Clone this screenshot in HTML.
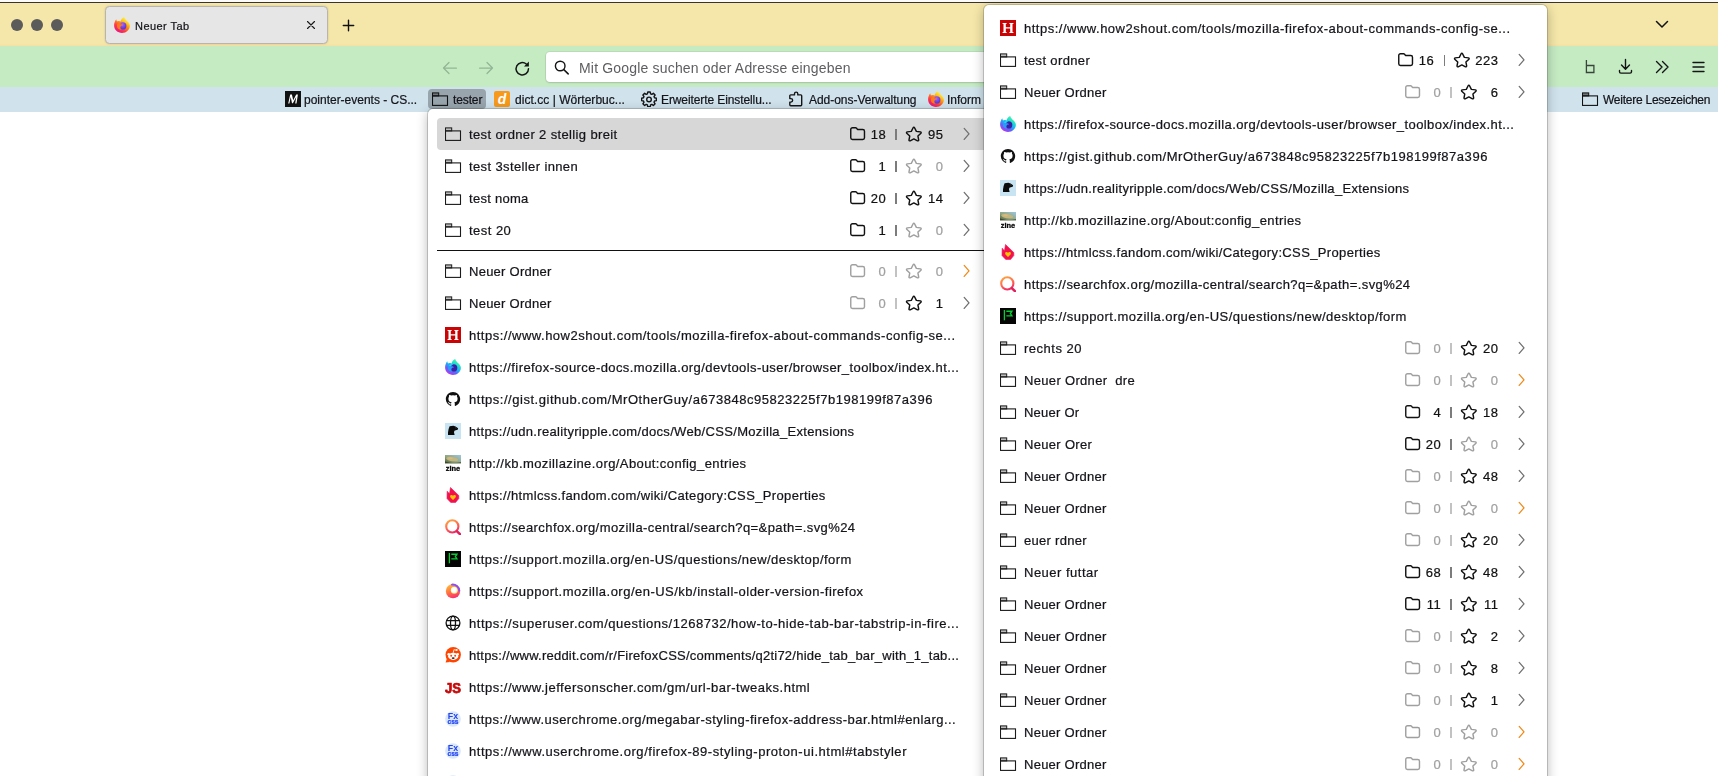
<!DOCTYPE html>
<html><head><meta charset="utf-8"><title>Neuer Tab</title>
<style>
html,body{margin:0;padding:0}
body{width:1718px;height:776px;overflow:hidden;background:#fff;position:relative;font-family:"Liberation Sans",sans-serif;font-size:13px;color:#15141a}
.abs{position:absolute}
.t,.n,.title,.ph,.bm span{will-change:transform}
.t,.n,.title,.bm span{-webkit-text-stroke:0.220px currentColor}
#topline{left:0;top:0;width:1718px;height:3px;background:linear-gradient(#fbfbfb 0,#fbfbfb 1.800px,#3a3334 2px,#3a3334 3px)}
#tabbar{left:0;top:3px;width:1718px;height:43.300px;background:linear-gradient(#f5e7a9 0,#f5e7a9 41px,#f7e0a3 42px,#f7e0a3 100%)}
#navbar{left:0;top:46.300px;width:1718px;height:40.500px;background:#c5ebc3}
#bmbar{left:0;top:86.800px;width:1718px;height:25px;background:#d0e3ed}
.tl{position:absolute;top:19px;width:12px;height:12px;border-radius:50%;background:#5b5b5b}
#tab{left:105px;top:6px;width:221px;height:36px;border:1px solid #b9b5ad;border-radius:4.500px;background:#e6e6e6;box-shadow:0 0 2px rgba(0,0,0,.18)}
#tab .title{position:absolute;left:30px;top:12.500px;font-size:11px;color:#15141a;white-space:nowrap}
#urlbar{left:546px;top:52px;width:460px;height:30px;background:#fff;border-radius:4px;box-shadow:0 0 0 1px rgba(0,0,0,.06),0 1px 2px rgba(0,0,0,.12)}
#urlbar .ph{position:absolute;left:34px;top:7.500px;font-size:14px;color:#5e5e62;white-space:nowrap}
.bm{position:absolute;top:91px;height:17px;line-height:17px;font-size:12px;white-space:nowrap;color:#15141a}
.bm svg{position:absolute;left:0;top:-0.500px}
.bm span{position:absolute;left:20px;top:0.500px}
.popup{position:absolute;background:#fff;border-radius:5px;box-shadow:0 0 0 1px rgba(0,0,0,.17),0 3px 12px rgba(0,0,0,.30)}
#pl{left:427.500px;top:109px;width:601px;height:700px}
#pr{left:983.500px;top:4.500px;width:563.500px;height:800px}
.row{position:absolute;left:9.500px;right:8px;height:32px;border-radius:4px;white-space:nowrap}
#pr .row{left:8.500px}
.row.hl{background:#d7d7d7}
.row .ic{position:absolute;left:8px;top:8px}
.row .t{position:absolute;left:32px;top:8.500px;line-height:15px;font-size:13px;white-space:pre}
.sep{position:absolute;left:9.500px;right:0;height:1px;background:#111}
.cnt{position:absolute;left:412.500px;top:0;height:32px;width:130px}
#pr .cnt{left:412.500px}
.cnt svg{position:absolute}
.cnt .grp{position:absolute;top:0;width:80px;height:32px}
.cnt .cf{left:0;top:7.500px}
.cnt .n{position:absolute;left:13.200px;width:23.300px;text-align:right;top:8.500px;line-height:15px;font-size:13px;letter-spacing:.5px}
.cnt .bar{position:absolute;left:45.800px;top:10.500px;width:1.400px;height:11px}
.cnt .cs{left:55.500px;top:7.500px}
.cnt .n2{left:66px;width:27.500px}
.cnt .ch{left:113px;top:8.500px}
</style></head><body>
<div class="abs" id="tabbar"></div>
<div class="abs" id="navbar"></div>
<div class="abs" id="bmbar"></div>
<div class="abs" id="topline"></div>
<div class="tl" style="left:11px"></div><div class="tl" style="left:31px"></div><div class="tl" style="left:51px"></div>
<div class="abs" id="tab"><div class="abs" style="left:8px;top:9.700px"><svg width="16" height="16" viewBox="0 0 16 16"><defs><linearGradient id="fl1" x1=".82" y1=".08" x2=".22" y2=".95"><stop offset="0" stop-color="#fff44f"/><stop offset=".22" stop-color="#ffd21f"/><stop offset=".45" stop-color="#ff8a16"/><stop offset=".72" stop-color="#ff3647"/><stop offset="1" stop-color="#e31587"/></linearGradient><radialGradient id="fl1g" cx=".45" cy=".3" r=".8"><stop offset="0" stop-color="#a667ff"/><stop offset=".6" stop-color="#6b3fe0"/><stop offset="1" stop-color="#3a3bd0"/></radialGradient></defs><path d="M10.300.1C10.400 1.500 11.400 2.500 12.400 3.400 13.900 4.600 15.900 6.200 15.900 8.800 15.900 12.800 12.400 16 8 16S.1 12.800.1 8.600C.1 6.200.9 4 2.300 2.300 2.400 3.200 2.700 3.900 3.100 4.400 3.800 4.100 4.600 4 5.400 4.100 5.800 4.200 6.300 4.300 6.700 4.500 6.600 2.800 8.200 1.100 10.300.1z" fill="url(#fl1)"/><circle cx="8.700" cy="8.900" r="3.700" fill="url(#fl1g)"/><path d="M3.300 7.300c1.100-1.900 3.700-2.500 5.500-1.300-1.300-.1-2.300.400-2.700 1.300 1.500 0 2.700.400 3 1.400-1.200-.300-2.200.1-2.600 1-.500 1 .100 2.400 1.700 2.900-2.700.500-5.300-1.200-5.300-3.700 0-.6.100-1.100.4-1.600z" fill="#ff7a1c"/></svg></div><div class="title" id="title" style="letter-spacing:0.450px;margin-left:-0.80px">Neuer Tab</div>
<svg class="abs" style="left:200px;top:13px" width="10" height="10" viewBox="0 0 10 10"><path d="M1.500 1.500l7 7M8.500 1.500l-7 7" stroke="#1a1a1a" stroke-width="1.150" stroke-linecap="round"/></svg></div>
<svg class="abs" style="left:342.100px;top:19.400px" width="13" height="13" viewBox="0 0 13 13"><path d="M6.500 1.300v10.400M1.300 6.500h10.400" stroke="#111" stroke-width="1.400" stroke-linecap="round"/></svg>
<svg class="abs" style="left:1655px;top:20px" width="14" height="9" viewBox="0 0 14 9"><path d="M1.500 1.500L7 7l5.500-5.500" fill="none" stroke="#111" stroke-width="1.500" stroke-linecap="round" stroke-linejoin="round"/></svg>

<!-- nav buttons -->
<svg class="abs" style="left:442px;top:60px" width="16" height="16" viewBox="0 0 16 16"><path d="M14.500 8H2M7 2.500L1.500 8 7 13.500" fill="none" stroke="#93b694" stroke-width="1.250" stroke-linecap="round" stroke-linejoin="round"/></svg>
<svg class="abs" style="left:478px;top:60px" width="16" height="16" viewBox="0 0 16 16"><path d="M1.500 8H14M9 2.500L14.500 8 9 13.500" fill="none" stroke="#93b694" stroke-width="1.250" stroke-linecap="round" stroke-linejoin="round"/></svg>
<svg class="abs" style="left:514px;top:59.500px" width="17" height="17" viewBox="0 0 17 17"><path d="M14.500 8.800a6.200 6.200 0 1 1-2.200-4.800" fill="none" stroke="#151515" stroke-width="1.500" stroke-linecap="round"/><path d="M14.900 1.600v4.900H10z" fill="#151515"/></svg>
<div class="abs" id="urlbar"><svg class="abs" style="left:7.500px;top:7.500px" width="16" height="15" viewBox="0 0 16 15"><circle cx="6.200" cy="6" r="4.800" fill="none" stroke="#151515" stroke-width="1.400"/><path d="M9.800 9.600l4.400 4.300" stroke="#151515" stroke-width="1.500" stroke-linecap="round"/></svg><div class="ph" id="ph" style="letter-spacing:0.179px;margin-left:-0.80px">Mit Google suchen oder Adresse eingeben</div></div>
<!-- right toolbar icons -->
<svg class="abs" style="left:1585px;top:59px" width="11" height="15" viewBox="0 0 11 15"><path d="M1.400 1v12.500h7.500v-7h-7.500" fill="none" stroke="#39453a" stroke-width="1.300"/></svg>
<svg class="abs" style="left:1617.600px;top:58px" width="15" height="17" viewBox="0 0 15 17"><path d="M7.500 1.500v9.500M3.500 7l4 4.200 4-4.200M1.500 12.500v1.200c0 .8.600 1.400 1.400 1.400h9.200c.8 0 1.400-.6 1.400-1.400v-1.200" fill="none" stroke="#151515" stroke-width="1.400" stroke-linecap="round" stroke-linejoin="round"/></svg>
<svg class="abs" style="left:1655px;top:60px" width="14" height="14" viewBox="0 0 14 14"><path d="M1.500 1.500L7 7l-5.500 5.500M7.500 1.500L13 7l-5.500 5.500" fill="none" stroke="#151515" stroke-width="1.400" stroke-linecap="round" stroke-linejoin="round"/></svg>
<svg class="abs" style="left:1691.500px;top:61px" width="13" height="12" viewBox="0 0 13 12"><path d="M1 1.500h11M1 6h11M1 10.500h11" stroke="#151515" stroke-width="1.400" stroke-linecap="round"/></svg>

<!-- bookmarks bar -->
<div class="bm" style="left:285px"><svg width="16" height="16" viewBox="0 0 16 16"><rect width="16" height="16" fill="#111"/><path d="M3.200 12.500L5.200 3.600h1.700l1.300 5.600 3-5.600h1.700l-1.400 8.900h-1.300l1-6.500-3.300 6.200H7L5.700 6.100l-1.300 6.400z" fill="#fff"/></svg><span id="bm1" style="letter-spacing:-0.010px;margin-left:-1.00px">pointer-events - CS...</span></div>
<div class="abs" style="left:428.300px;top:88.700px;width:57.500px;height:20px;border-radius:4px;background:#98a5ad"></div>
<div class="bm" style="left:432px"><svg class="ic" width="17" height="16" viewBox="0 0 17 16"><rect x="0.5" y="1.9" width="6.2" height="3" fill="#6d757b" stroke="#111" stroke-width="1"/><rect x="0.5" y="4.9" width="15" height="9.500" fill="none" stroke="#111" stroke-width="1.1"/></svg><span id="bm2" style="letter-spacing:-0.120px;margin-left:0.80px">tester</span></div>
<div class="bm" style="left:494px"><svg width="16" height="16" viewBox="0 0 16 16"><rect width="16" height="16" rx="2" fill="#f79a1c"/><text x="8" y="13" font-family="Liberation Sans, sans-serif" font-style="italic" font-weight="bold" font-size="14" text-anchor="middle" fill="#fff">d</text></svg><span id="bm3" style="letter-spacing:0.038px;margin-left:1.00px">dict.cc | Wörterbuc...</span></div>
<div class="bm" style="left:641px"><svg width="16" height="16" viewBox="0 0 16 16"><g fill="none" stroke="#151515" stroke-width="1.400" stroke-linejoin="round"><path d="M6.800 1h2.400l.4 1.900 1.200.5 1.600-1.100 1.700 1.700-1.100 1.600.5 1.200 1.900.4v2.400l-1.900.4-.5 1.200 1.100 1.600-1.700 1.700-1.600-1.100-1.200.5-.4 1.900H6.800l-.4-1.900-1.200-.5-1.600 1.100-1.700-1.700 1.100-1.600-.5-1.200L.6 9.600V7.200l1.900-.4.5-1.200-1.100-1.600 1.700-1.700 1.600 1.100 1.200-.5z"/><circle cx="8" cy="8.400" r="2.300"/></g></svg><span id="bm4" style="letter-spacing:-0.100px;margin-left:-0.40px">Erweiterte Einstellu...</span></div>
<div class="bm" style="left:788px"><svg width="16" height="16" viewBox="0 0 16 16"><path d="M6.500 3.900V2.800a1.650 1.650 0 0 1 3.300 0v1.100h3c.5 0 .9.400.9.900v9c0 .5-.4.900-.9.900H2.700a.9.900 0 0 1-.9-.9v-2.700h1.100a1.750 1.750 0 0 0 0-3.500H1.800V4.800c0-.5.400-.9.900-.9z" fill="none" stroke="#151515" stroke-width="1.400" stroke-linejoin="round"/></svg><span id="bm5" style="letter-spacing:-0.035px;margin-left:0.80px">Add-ons-Verwaltung</span></div>
<div class="bm" style="left:928px"><svg width="16" height="16" viewBox="0 0 16 16"><defs><linearGradient id="fl2" x1=".82" y1=".08" x2=".22" y2=".95"><stop offset="0" stop-color="#fff44f"/><stop offset=".22" stop-color="#ffd21f"/><stop offset=".45" stop-color="#ff8a16"/><stop offset=".72" stop-color="#ff3647"/><stop offset="1" stop-color="#e31587"/></linearGradient><radialGradient id="fl2g" cx=".45" cy=".3" r=".8"><stop offset="0" stop-color="#a667ff"/><stop offset=".6" stop-color="#6b3fe0"/><stop offset="1" stop-color="#3a3bd0"/></radialGradient></defs><path d="M10.300.1C10.400 1.500 11.400 2.500 12.400 3.400 13.900 4.600 15.900 6.200 15.900 8.800 15.900 12.800 12.400 16 8 16S.1 12.800.1 8.600C.1 6.200.9 4 2.300 2.300 2.400 3.200 2.700 3.900 3.100 4.400 3.800 4.100 4.600 4 5.400 4.100 5.800 4.200 6.300 4.300 6.700 4.500 6.600 2.800 8.200 1.100 10.300.1z" fill="url(#fl2)"/><circle cx="8.700" cy="8.900" r="3.700" fill="url(#fl2g)"/><path d="M3.300 7.300c1.100-1.900 3.700-2.500 5.500-1.300-1.300-.1-2.300.400-2.700 1.300 1.500 0 2.700.400 3 1.400-1.200-.300-2.200.1-2.600 1-.500 1 .100 2.400 1.700 2.900-2.700.500-5.300-1.200-5.300-3.700 0-.6.100-1.100.4-1.600z" fill="#ff7a1c"/></svg><span id="bm6" style="letter-spacing:0.000px;margin-left:-0.60px">Inform</span></div>
<div class="bm" style="left:1582px"><svg class="ic" width="17" height="16" viewBox="0 0 17 16"><rect x="0.5" y="1.9" width="6.2" height="3" fill="#6d757b" stroke="#111" stroke-width="1"/><rect x="0.5" y="4.9" width="15" height="9.500" fill="none" stroke="#111" stroke-width="1.1"/></svg><span id="bm7" style="letter-spacing:-0.244px;margin-left:0.80px">Weitere Lesezeichen</span></div>

<div class="popup" id="pl">
<div class="row hl" style="top:9px"><svg class="ic" width="17" height="16" viewBox="0 0 17 16"><rect x="0.5" y="1.9" width="6.2" height="3" fill="#bcbcbc" stroke="#1a1a1a" stroke-width="1"/><rect x="0.5" y="4.9" width="15" height="9.500" fill="none" stroke="#1a1a1a" stroke-width="1.1"/></svg><span class="t" id="t0" style="letter-spacing:0.362px">test ordner 2 stellig breit</span><span class="cnt"><span class="grp" style="left:0px"><svg class="cf" width="16" height="16" viewBox="0 0 16.800 16.800"><path d="M2.6 1.9h3.3c.4 0 .8.2 1 .5l.9 1.2h5.6c1 0 1.8.8 1.8 1.8v6.9c0 1-.8 1.8-1.8 1.8H2.6c-1 0-1.8-.8-1.8-1.8V3.7c0-1 .8-1.8 1.8-1.8z" fill="none" stroke="#111" stroke-width="1.500" stroke-linejoin="round"/></svg><span class="n" style="color:#111">18</span><span class="bar" style="background:#7c7c7c"></span><svg class="cs" width="17.700" height="16" viewBox="0 0 17 16" preserveAspectRatio="none"><path d="M8.5 1.3c.3 0 .55.17.68.45l1.75 3.6 3.95.58c.62.1.87.85.42 1.29l-2.86 2.8.68 3.95c.1.62-.54 1.09-1.1.8L8.5 12.9l-3.53 1.87c-.56.29-1.2-.18-1.1-.8l.68-3.95-2.86-2.8c-.45-.44-.2-1.2.42-1.29l3.95-.58 1.76-3.6c.13-.28.39-.45.68-.45z" fill="none" stroke="#111" stroke-width="1.400" stroke-linejoin="round"/></svg></span><span class="n n2" style="color:#111">95</span><svg class="ch" width="8" height="14" viewBox="0 0 8 14"><path d="M1.200 1.400L6 6.900 1.200 12.400" fill="none" stroke="#707070" stroke-width="1.300" stroke-linecap="round" stroke-linejoin="round"/></svg></span></div>
<div class="row" style="top:41px"><svg class="ic" width="17" height="16" viewBox="0 0 17 16"><rect x="0.5" y="1.9" width="6.2" height="3" fill="#bcbcbc" stroke="#1a1a1a" stroke-width="1"/><rect x="0.5" y="4.9" width="15" height="9.500" fill="none" stroke="#1a1a1a" stroke-width="1.1"/></svg><span class="t" id="t1" style="letter-spacing:0.378px">test 3steller innen</span><span class="cnt"><span class="grp" style="left:0px"><svg class="cf" width="16" height="16" viewBox="0 0 16.800 16.800"><path d="M2.6 1.9h3.3c.4 0 .8.2 1 .5l.9 1.2h5.6c1 0 1.8.8 1.8 1.8v6.9c0 1-.8 1.8-1.8 1.8H2.6c-1 0-1.8-.8-1.8-1.8V3.7c0-1 .8-1.8 1.8-1.8z" fill="none" stroke="#111" stroke-width="1.500" stroke-linejoin="round"/></svg><span class="n" style="color:#111">1</span><span class="bar" style="background:#7c7c7c"></span><svg class="cs" width="17.700" height="16" viewBox="0 0 17 16" preserveAspectRatio="none"><path d="M8.5 1.3c.3 0 .55.17.68.45l1.75 3.6 3.95.58c.62.1.87.85.42 1.29l-2.86 2.8.68 3.95c.1.62-.54 1.09-1.1.8L8.5 12.9l-3.53 1.87c-.56.29-1.2-.18-1.1-.8l.68-3.95-2.86-2.8c-.45-.44-.2-1.2.42-1.29l3.95-.58 1.76-3.6c.13-.28.39-.45.68-.45z" fill="none" stroke="#a0a0a0" stroke-width="1.400" stroke-linejoin="round"/></svg></span><span class="n n2" style="color:#a0a0a0">0</span><svg class="ch" width="8" height="14" viewBox="0 0 8 14"><path d="M1.200 1.400L6 6.900 1.200 12.400" fill="none" stroke="#707070" stroke-width="1.300" stroke-linecap="round" stroke-linejoin="round"/></svg></span></div>
<div class="row" style="top:73px"><svg class="ic" width="17" height="16" viewBox="0 0 17 16"><rect x="0.5" y="1.9" width="6.2" height="3" fill="#bcbcbc" stroke="#1a1a1a" stroke-width="1"/><rect x="0.5" y="4.9" width="15" height="9.500" fill="none" stroke="#1a1a1a" stroke-width="1.1"/></svg><span class="t" id="t2" style="letter-spacing:0.275px">test noma</span><span class="cnt"><span class="grp" style="left:0px"><svg class="cf" width="16" height="16" viewBox="0 0 16.800 16.800"><path d="M2.6 1.9h3.3c.4 0 .8.2 1 .5l.9 1.2h5.6c1 0 1.8.8 1.8 1.8v6.9c0 1-.8 1.8-1.8 1.8H2.6c-1 0-1.8-.8-1.8-1.8V3.7c0-1 .8-1.8 1.8-1.8z" fill="none" stroke="#111" stroke-width="1.500" stroke-linejoin="round"/></svg><span class="n" style="color:#111">20</span><span class="bar" style="background:#7c7c7c"></span><svg class="cs" width="17.700" height="16" viewBox="0 0 17 16" preserveAspectRatio="none"><path d="M8.5 1.3c.3 0 .55.17.68.45l1.75 3.6 3.95.58c.62.1.87.85.42 1.29l-2.86 2.8.68 3.95c.1.62-.54 1.09-1.1.8L8.5 12.9l-3.53 1.87c-.56.29-1.2-.18-1.1-.8l.68-3.95-2.86-2.8c-.45-.44-.2-1.2.42-1.29l3.95-.58 1.76-3.6c.13-.28.39-.45.68-.45z" fill="none" stroke="#111" stroke-width="1.400" stroke-linejoin="round"/></svg></span><span class="n n2" style="color:#111">14</span><svg class="ch" width="8" height="14" viewBox="0 0 8 14"><path d="M1.200 1.400L6 6.900 1.200 12.400" fill="none" stroke="#707070" stroke-width="1.300" stroke-linecap="round" stroke-linejoin="round"/></svg></span></div>
<div class="row" style="top:105px"><svg class="ic" width="17" height="16" viewBox="0 0 17 16"><rect x="0.5" y="1.9" width="6.2" height="3" fill="#bcbcbc" stroke="#1a1a1a" stroke-width="1"/><rect x="0.5" y="4.9" width="15" height="9.500" fill="none" stroke="#1a1a1a" stroke-width="1.1"/></svg><span class="t" id="t3" style="letter-spacing:0.467px">test 20</span><span class="cnt"><span class="grp" style="left:0px"><svg class="cf" width="16" height="16" viewBox="0 0 16.800 16.800"><path d="M2.6 1.9h3.3c.4 0 .8.2 1 .5l.9 1.2h5.6c1 0 1.8.8 1.8 1.8v6.9c0 1-.8 1.8-1.8 1.8H2.6c-1 0-1.8-.8-1.8-1.8V3.7c0-1 .8-1.8 1.8-1.8z" fill="none" stroke="#111" stroke-width="1.500" stroke-linejoin="round"/></svg><span class="n" style="color:#111">1</span><span class="bar" style="background:#7c7c7c"></span><svg class="cs" width="17.700" height="16" viewBox="0 0 17 16" preserveAspectRatio="none"><path d="M8.5 1.3c.3 0 .55.17.68.45l1.75 3.6 3.95.58c.62.1.87.85.42 1.29l-2.86 2.8.68 3.95c.1.62-.54 1.09-1.1.8L8.5 12.9l-3.53 1.87c-.56.29-1.2-.18-1.1-.8l.68-3.95-2.86-2.8c-.45-.44-.2-1.2.42-1.29l3.95-.58 1.76-3.6c.13-.28.39-.45.68-.45z" fill="none" stroke="#a0a0a0" stroke-width="1.400" stroke-linejoin="round"/></svg></span><span class="n n2" style="color:#a0a0a0">0</span><svg class="ch" width="8" height="14" viewBox="0 0 8 14"><path d="M1.200 1.400L6 6.900 1.200 12.400" fill="none" stroke="#707070" stroke-width="1.300" stroke-linecap="round" stroke-linejoin="round"/></svg></span></div>
<div class="sep" style="top:141px"></div>
<div class="row" style="top:146px"><svg class="ic" width="17" height="16" viewBox="0 0 17 16"><rect x="0.5" y="1.9" width="6.2" height="3" fill="#bcbcbc" stroke="#1a1a1a" stroke-width="1"/><rect x="0.5" y="4.9" width="15" height="9.500" fill="none" stroke="#1a1a1a" stroke-width="1.1"/></svg><span class="t" id="t4" style="letter-spacing:0.255px">Neuer Ordner</span><span class="cnt"><span class="grp" style="left:0px"><svg class="cf" width="16" height="16" viewBox="0 0 16.800 16.800"><path d="M2.6 1.9h3.3c.4 0 .8.2 1 .5l.9 1.2h5.6c1 0 1.8.8 1.8 1.8v6.9c0 1-.8 1.8-1.8 1.8H2.6c-1 0-1.8-.8-1.8-1.8V3.7c0-1 .8-1.8 1.8-1.8z" fill="none" stroke="#a0a0a0" stroke-width="1.500" stroke-linejoin="round"/></svg><span class="n" style="color:#a0a0a0">0</span><span class="bar" style="background:#c2c2c2"></span><svg class="cs" width="17.700" height="16" viewBox="0 0 17 16" preserveAspectRatio="none"><path d="M8.5 1.3c.3 0 .55.17.68.45l1.75 3.6 3.95.58c.62.1.87.85.42 1.29l-2.86 2.8.68 3.95c.1.62-.54 1.09-1.1.8L8.5 12.9l-3.53 1.87c-.56.29-1.2-.18-1.1-.8l.68-3.95-2.86-2.8c-.45-.44-.2-1.2.42-1.29l3.95-.58 1.76-3.6c.13-.28.39-.45.68-.45z" fill="none" stroke="#a0a0a0" stroke-width="1.400" stroke-linejoin="round"/></svg></span><span class="n n2" style="color:#a0a0a0">0</span><svg class="ch" width="8" height="14" viewBox="0 0 8 14"><path d="M1.200 1.400L6 6.900 1.200 12.400" fill="none" stroke="#f08a1c" stroke-width="1.300" stroke-linecap="round" stroke-linejoin="round"/></svg></span></div>
<div class="row" style="top:178px"><svg class="ic" width="17" height="16" viewBox="0 0 17 16"><rect x="0.5" y="1.9" width="6.2" height="3" fill="#bcbcbc" stroke="#1a1a1a" stroke-width="1"/><rect x="0.5" y="4.9" width="15" height="9.500" fill="none" stroke="#1a1a1a" stroke-width="1.1"/></svg><span class="t" id="t5" style="letter-spacing:0.255px">Neuer Ordner</span><span class="cnt"><span class="grp" style="left:0px"><svg class="cf" width="16" height="16" viewBox="0 0 16.800 16.800"><path d="M2.6 1.9h3.3c.4 0 .8.2 1 .5l.9 1.2h5.6c1 0 1.8.8 1.8 1.8v6.9c0 1-.8 1.8-1.8 1.8H2.6c-1 0-1.8-.8-1.8-1.8V3.7c0-1 .8-1.8 1.8-1.8z" fill="none" stroke="#a0a0a0" stroke-width="1.500" stroke-linejoin="round"/></svg><span class="n" style="color:#a0a0a0">0</span><span class="bar" style="background:#c2c2c2"></span><svg class="cs" width="17.700" height="16" viewBox="0 0 17 16" preserveAspectRatio="none"><path d="M8.5 1.3c.3 0 .55.17.68.45l1.75 3.6 3.95.58c.62.1.87.85.42 1.29l-2.86 2.8.68 3.95c.1.62-.54 1.09-1.1.8L8.5 12.9l-3.53 1.87c-.56.29-1.2-.18-1.1-.8l.68-3.95-2.86-2.8c-.45-.44-.2-1.2.42-1.29l3.95-.58 1.76-3.6c.13-.28.39-.45.68-.45z" fill="none" stroke="#111" stroke-width="1.400" stroke-linejoin="round"/></svg></span><span class="n n2" style="color:#111">1</span><svg class="ch" width="8" height="14" viewBox="0 0 8 14"><path d="M1.200 1.400L6 6.900 1.200 12.400" fill="none" stroke="#707070" stroke-width="1.300" stroke-linecap="round" stroke-linejoin="round"/></svg></span></div>
<div class="row" style="top:210px"><svg class="ic" width="16" height="16" viewBox="0 0 16 16"><rect width="16" height="16" fill="#c80404"/><path d="M2.6 3h4v1.1H5.8v3.2h4.4V4.1H9.4V3h4v1.1h-.9v7.8h.9V13h-4v-1.1h.8V8.6H5.8v3.3h.8V13h-4v-1.1h.9V4.1h-.9z" fill="#fff"/></svg><span class="t" id="t6" style="letter-spacing:0.505px">https://www.how2shout.com/tools/mozilla-firefox-about-commands-config-se...</span></div>
<div class="row" style="top:242px"><svg class="ic" width="16" height="16" viewBox="0 0 16 16"><defs><linearGradient id="fd1" x1=".82" y1=".08" x2=".25" y2=".95"><stop offset="0" stop-color="#54f0a0"/><stop offset=".25" stop-color="#1fe3c8"/><stop offset=".5" stop-color="#1ab2fa"/><stop offset=".75" stop-color="#6a5cf6"/><stop offset="1" stop-color="#b23cf0"/></linearGradient></defs><path d="M10.300.1C10.400 1.500 11.400 2.500 12.400 3.400 13.900 4.600 15.900 6.200 15.900 8.800 15.900 12.800 12.400 16 8 16S.1 12.800.1 8.600C.1 6.200.9 4 2.300 2.300 2.400 3.200 2.700 3.900 3.100 4.400 3.800 4.100 4.600 4 5.400 4.100 5.800 4.200 6.300 4.300 6.700 4.500 6.600 2.800 8.200 1.100 10.300.1z" fill="url(#fd1)"/><circle cx="8.700" cy="8.900" r="3.600" fill="#3a1fa6"/><path d="M3.300 7.300c1.100-1.900 3.700-2.500 5.500-1.300-1.300-.1-2.300.400-2.700 1.300 1.500 0 2.700.400 3 1.400-1.200-.300-2.200.1-2.600 1-.500 1 .100 2.400 1.700 2.900-2.700.500-5.300-1.200-5.300-3.700 0-.6.100-1.100.4-1.600z" fill="#2a9cf8"/><path d="M3.600 6.800c1.100-1.500 3.100-2 4.700-1.300-1.200.100-2 .600-2.400 1.500-.9-.1-1.700-.100-2.300-.2z" fill="#22e0f4"/></svg><span class="t" id="t7" style="letter-spacing:0.415px">https://firefox-source-docs.mozilla.org/devtools-user/browser_toolbox/index.ht...</span></div>
<div class="row" style="top:274px"><svg class="ic" width="16" height="16" viewBox="0 0 16 16"><path fill="#111" d="M8 .9C4 .9.800 4.100.800 8.100c0 3.200 2.100 5.900 4.900 6.800.4.100.5-.2.500-.3v-1.300c-2 .400-2.400-.900-2.400-.900-.300-.800-.800-1.100-.800-1.100-.700-.400 0-.400 0-.400.700 0 1.100.700 1.100.700.600 1.100 1.700.800 2.100.600.100-.500.300-.800.500-.900-1.600-.200-3.300-.800-3.300-3.600 0-.800.300-1.400.700-1.900-.100-.200-.300-.900.100-1.900 0 0 .600-.200 2 .700a6.900 6.900 0 0 1 3.600 0c1.400-.900 2-.700 2-.700.400 1 .100 1.700.100 1.900.500.500.700 1.100.700 1.900 0 2.800-1.700 3.400-3.300 3.600.300.200.500.700.500 1.300v2c0 .200.100.400.500.300a7.200 7.200 0 0 0 4.900-6.800C15.200 4.100 12 .9 8 .9z"/></svg><span class="t" id="t8" style="letter-spacing:0.527px">https://gist.github.com/MrOtherGuy/a673848c95823225f7b198199f87a396</span></div>
<div class="row" style="top:306px"><svg class="ic" width="16" height="16" viewBox="0 0 16 16"><rect width="16" height="16" fill="#c8e4f3"/><path d="M4.600 3.200L8.400 2.800 10.600 3.600 13.100 5.200 12.700 6.700 10.800 7.200 9.400 7.700 9 9.300 9.600 11.900H3V9.500L3.600 6z" fill="#0a0a0a"/><path d="M10.200 4.700l1.200.6" stroke="#555" stroke-width=".7"/></svg><span class="t" id="t9" style="letter-spacing:0.327px">https://udn.realityripple.com/docs/Web/CSS/Mozilla_Extensions</span></div>
<div class="row" style="top:338px"><svg class="ic" width="16" height="16" viewBox="0 0 16 16"><defs><linearGradient id="zn1" x1="1" y1="0" x2="0" y2="1"><stop offset="0" stop-color="#9cc6e2"/><stop offset=".55" stop-color="#8fa680"/><stop offset="1" stop-color="#4c5a36"/></linearGradient></defs><rect width="16" height="8.600" fill="url(#zn1)"/><ellipse cx="7.200" cy="4.100" rx="6" ry="2.100" transform="rotate(8 7.200 4.100)" fill="#c4b57e"/><ellipse cx="5.500" cy="3.300" rx="2.300" ry="1" fill="#d9b97c"/><path d="M0 6.200c3 1.800 9 2.400 16 1v1.400H0z" fill="#3c4a2c"/><rect y="8.600" width="16" height="7.400" fill="#fff"/><text x="8" y="15.800" font-family="Liberation Sans, sans-serif" font-weight="bold" font-size="7.600" text-anchor="middle" fill="#0a0a0a" textLength="14.500" lengthAdjust="spacingAndGlyphs" stroke="#0a0a0a" stroke-width=".3">zine</text></svg><span class="t" id="t10" style="letter-spacing:0.409px">http://kb.mozillazine.org/About:config_entries</span></div>
<div class="row" style="top:370px"><svg class="ic" width="16" height="16" viewBox="0 0 16 16"><path d="M5.500.5L13.800 8.600V11.600L10.500 15.600H5.800L2 11.600 2.200 4.200 4.500 6.800z" fill="#f2104f" stroke="#f2104f" stroke-width=".6" stroke-linejoin="round"/><path d="M8 12.900L5.500 10.400c-.6-.7-.5-1.600.1-2.100.7-.5 1.700-.3 2.400.5.700-.8 1.700-1 2.400-.5.600.5.700 1.400.1 2.100z" fill="#ffc400"/></svg><span class="t" id="t11" style="letter-spacing:0.363px">https://htmlcss.fandom.com/wiki/Category:CSS_Properties</span></div>
<div class="row" style="top:402px"><svg class="ic" width="16" height="16" viewBox="0 0 16 16"><defs><linearGradient id="sf1" x1=".3" y1="0" x2=".7" y2="1"><stop offset="0" stop-color="#ff9d3e"/><stop offset=".5" stop-color="#ff6a52"/><stop offset="1" stop-color="#ee2a66"/></linearGradient></defs><circle cx="7.300" cy="7.400" r="6.100" fill="none" stroke="url(#sf1)" stroke-width="2.100"/><path d="M12 12.300l3 2.900" stroke="#e0205c" stroke-width="2.500" stroke-linecap="round"/></svg><span class="t" id="t12" style="letter-spacing:0.420px">https://searchfox.org/mozilla-central/search?q=&amp;path=.svg%24</span></div>
<div class="row" style="top:434px"><svg class="ic" width="16" height="16" viewBox="0 0 16 16"><rect width="16" height="16" fill="#050505"/><path d="M4.400 2v10.300" stroke="#00d230" stroke-width="1.300"/><path d="M6.300 3.200h5.600l-1.500 2.300 1.500 2.400H6.300" fill="none" stroke="#00d230" stroke-width="1.400"/></svg><span class="t" id="t13" style="letter-spacing:0.468px">https://support.mozilla.org/en-US/questions/new/desktop/form</span></div>
<div class="row" style="top:466px"><svg class="ic" width="16" height="16" viewBox="0 0 16 16"><defs><linearGradient id="fb1" x1=".25" y1=".1" x2=".6" y2="1"><stop offset="0" stop-color="#ffb43c"/><stop offset=".45" stop-color="#ff7440"/><stop offset="1" stop-color="#fb2d70"/></linearGradient></defs><circle cx="8" cy="8.100" r="7.200" fill="url(#fb1)"/><circle cx="9.300" cy="7.300" r="3.500" fill="#ffdf7a"/><circle cx="9" cy="6.900" r="2.900" fill="#fff"/><path d="M7 1.600A6.600 6.600 0 0 1 14.300 7.600" fill="none" stroke="#8a4cf5" stroke-width="1.900" stroke-linecap="round"/></svg><span class="t" id="t14" style="letter-spacing:0.483px">https://support.mozilla.org/en-US/kb/install-older-version-firefox</span></div>
<div class="row" style="top:498px"><svg class="ic" width="16" height="16" viewBox="0 0 16 16"><g fill="none" stroke="#111" stroke-width="1.300"><circle cx="8" cy="8" r="6.900"/><ellipse cx="8" cy="8" rx="2.500" ry="6.900"/><path d="M1.700 5.700h12.600M1.700 10.300h12.600"/></g></svg><span class="t" id="t15" style="letter-spacing:0.518px">https://superuser.com/questions/1268732/how-to-hide-tab-bar-tabstrip-in-fire...</span></div>
<div class="row" style="top:530px"><svg class="ic" width="16" height="16" viewBox="0 0 16 16"><circle cx="8.200" cy="7.800" r="7.700" fill="#ff4500"/><path d="M.6 15.600l1.300-4 3.300 3.500z" fill="#ff4500"/><ellipse cx="8.200" cy="9.300" rx="5" ry="3.600" fill="#fff"/><circle cx="3.700" cy="7.300" r="1.300" fill="#fff"/><circle cx="12.700" cy="7.300" r="1.300" fill="#fff"/><circle cx="11.600" cy="3" r="1.100" fill="#fff"/><path d="M8.200 5.800l.7-3.100 2.700.5" fill="none" stroke="#fff" stroke-width=".8"/><circle cx="6.200" cy="8.700" r="1" fill="#ff4500"/><circle cx="10.200" cy="8.700" r="1" fill="#ff4500"/><ellipse cx="8.200" cy="11.100" rx="1.500" ry=".9" fill="#222"/></svg><span class="t" id="t16" style="letter-spacing:0.234px">https://www.reddit.com/r/FirefoxCSS/comments/q2ti72/hide_tab_bar_with_1_tab...</span></div>
<div class="row" style="top:562px"><svg class="ic" width="16" height="16" viewBox="0 0 16 16"><text x="8" y="13.500" font-family="Liberation Sans, sans-serif" font-weight="bold" font-size="14" text-anchor="middle" fill="#c60a0a" textLength="16" lengthAdjust="spacingAndGlyphs" stroke="#c60a0a" stroke-width=".75">JS</text></svg><span class="t" id="t17" style="letter-spacing:0.500px">https://www.jeffersonscher.com/gm/url-bar-tweaks.html</span></div>
<div class="row" style="top:594px"><svg class="ic" width="16" height="16" viewBox="0 0 16 16"><circle cx="8" cy="8" r="7.800" fill="#d9e7fd"/><text x="8" y="8.200" font-family="Liberation Sans, sans-serif" font-weight="bold" font-size="8.800" text-anchor="middle" fill="#2343f0">Fx</text><text x="8" y="13.200" font-family="Liberation Sans, sans-serif" font-weight="bold" font-size="6.600" text-anchor="middle" fill="#2343f0" stroke="#2343f0" stroke-width=".2">css</text></svg><span class="t" id="t18" style="letter-spacing:0.453px">https://www.userchrome.org/megabar-styling-firefox-address-bar.html#enlarg...</span></div>
<div class="row" style="top:626px"><svg class="ic" width="16" height="16" viewBox="0 0 16 16"><circle cx="8" cy="8" r="7.800" fill="#d9e7fd"/><text x="8" y="8.200" font-family="Liberation Sans, sans-serif" font-weight="bold" font-size="8.800" text-anchor="middle" fill="#2343f0">Fx</text><text x="8" y="13.200" font-family="Liberation Sans, sans-serif" font-weight="bold" font-size="6.600" text-anchor="middle" fill="#2343f0" stroke="#2343f0" stroke-width=".2">css</text></svg><span class="t" id="t19" style="letter-spacing:0.539px">https://www.userchrome.org/firefox-89-styling-proton-ui.html#tabstyler</span></div>
<div class="row" style="top:658px"><svg class="ic" width="16" height="16" viewBox="0 0 16 16"><circle cx="8" cy="8" r="7.800" fill="#d9e7fd"/><text x="8" y="8.200" font-family="Liberation Sans, sans-serif" font-weight="bold" font-size="8.800" text-anchor="middle" fill="#2343f0">Fx</text><text x="8" y="13.200" font-family="Liberation Sans, sans-serif" font-weight="bold" font-size="6.600" text-anchor="middle" fill="#2343f0" stroke="#2343f0" stroke-width=".2">css</text></svg><span class="t" id="t20" style="letter-spacing:0.539px">https://www.userchrome.org/firefox-89-styling-proton-ui.html#tabstyler</span></div>
</div>
<div class="popup" id="pr">
<div class="row" style="top:7.5px"><svg class="ic" width="16" height="16" viewBox="0 0 16 16"><rect width="16" height="16" fill="#c80404"/><path d="M2.6 3h4v1.1H5.8v3.2h4.4V4.1H9.4V3h4v1.1h-.9v7.8h.9V13h-4v-1.1h.8V8.6H5.8v3.3h.8V13h-4v-1.1h.9V4.1h-.9z" fill="#fff"/></svg><span class="t" id="t21" style="letter-spacing:0.505px">https://www.how2shout.com/tools/mozilla-firefox-about-commands-config-se...</span></div>
<div class="row" style="top:39.5px"><svg class="ic" width="17" height="16" viewBox="0 0 17 16"><rect x="0.5" y="1.9" width="6.2" height="3" fill="#bcbcbc" stroke="#1a1a1a" stroke-width="1"/><rect x="0.5" y="4.9" width="15" height="9.500" fill="none" stroke="#1a1a1a" stroke-width="1.1"/></svg><span class="t" id="t22" style="letter-spacing:0.360px">test ordner</span><span class="cnt"><span class="grp" style="left:-6.7px"><svg class="cf" width="16" height="16" viewBox="0 0 16.800 16.800"><path d="M2.6 1.9h3.3c.4 0 .8.2 1 .5l.9 1.2h5.6c1 0 1.8.8 1.8 1.8v6.9c0 1-.8 1.8-1.8 1.8H2.6c-1 0-1.8-.8-1.8-1.8V3.7c0-1 .8-1.8 1.8-1.8z" fill="none" stroke="#111" stroke-width="1.500" stroke-linejoin="round"/></svg><span class="n" style="color:#111">16</span><span class="bar" style="background:#7c7c7c"></span><svg class="cs" width="17.700" height="16" viewBox="0 0 17 16" preserveAspectRatio="none"><path d="M8.5 1.3c.3 0 .55.17.68.45l1.75 3.6 3.95.58c.62.1.87.85.42 1.29l-2.86 2.8.68 3.95c.1.62-.54 1.09-1.1.8L8.5 12.9l-3.53 1.87c-.56.29-1.2-.18-1.1-.8l.68-3.95-2.86-2.8c-.45-.44-.2-1.2.42-1.29l3.95-.58 1.76-3.6c.13-.28.39-.45.68-.45z" fill="none" stroke="#111" stroke-width="1.400" stroke-linejoin="round"/></svg></span><span class="n n2" style="color:#111">223</span><svg class="ch" width="8" height="14" viewBox="0 0 8 14"><path d="M1.200 1.400L6 6.900 1.200 12.400" fill="none" stroke="#707070" stroke-width="1.300" stroke-linecap="round" stroke-linejoin="round"/></svg></span></div>
<div class="row" style="top:71.5px"><svg class="ic" width="17" height="16" viewBox="0 0 17 16"><rect x="0.5" y="1.9" width="6.2" height="3" fill="#bcbcbc" stroke="#1a1a1a" stroke-width="1"/><rect x="0.5" y="4.9" width="15" height="9.500" fill="none" stroke="#1a1a1a" stroke-width="1.1"/></svg><span class="t" id="t23" style="letter-spacing:0.255px">Neuer Ordner</span><span class="cnt"><span class="grp" style="left:0px"><svg class="cf" width="16" height="16" viewBox="0 0 16.800 16.800"><path d="M2.6 1.9h3.3c.4 0 .8.2 1 .5l.9 1.2h5.6c1 0 1.8.8 1.8 1.8v6.9c0 1-.8 1.8-1.8 1.8H2.6c-1 0-1.8-.8-1.8-1.8V3.7c0-1 .8-1.8 1.8-1.8z" fill="none" stroke="#a0a0a0" stroke-width="1.500" stroke-linejoin="round"/></svg><span class="n" style="color:#a0a0a0">0</span><span class="bar" style="background:#c2c2c2"></span><svg class="cs" width="17.700" height="16" viewBox="0 0 17 16" preserveAspectRatio="none"><path d="M8.5 1.3c.3 0 .55.17.68.45l1.75 3.6 3.95.58c.62.1.87.85.42 1.29l-2.86 2.8.68 3.95c.1.62-.54 1.09-1.1.8L8.5 12.9l-3.53 1.87c-.56.29-1.2-.18-1.1-.8l.68-3.95-2.86-2.8c-.45-.44-.2-1.2.42-1.29l3.95-.58 1.76-3.6c.13-.28.39-.45.68-.45z" fill="none" stroke="#111" stroke-width="1.400" stroke-linejoin="round"/></svg></span><span class="n n2" style="color:#111">6</span><svg class="ch" width="8" height="14" viewBox="0 0 8 14"><path d="M1.200 1.400L6 6.900 1.200 12.400" fill="none" stroke="#707070" stroke-width="1.300" stroke-linecap="round" stroke-linejoin="round"/></svg></span></div>
<div class="row" style="top:103.5px"><svg class="ic" width="16" height="16" viewBox="0 0 16 16"><defs><linearGradient id="fd1" x1=".82" y1=".08" x2=".25" y2=".95"><stop offset="0" stop-color="#54f0a0"/><stop offset=".25" stop-color="#1fe3c8"/><stop offset=".5" stop-color="#1ab2fa"/><stop offset=".75" stop-color="#6a5cf6"/><stop offset="1" stop-color="#b23cf0"/></linearGradient></defs><path d="M10.300.1C10.400 1.500 11.400 2.500 12.400 3.400 13.900 4.600 15.900 6.200 15.900 8.800 15.900 12.800 12.400 16 8 16S.1 12.800.1 8.600C.1 6.200.9 4 2.300 2.300 2.400 3.200 2.700 3.900 3.100 4.400 3.800 4.100 4.600 4 5.400 4.100 5.800 4.200 6.300 4.300 6.700 4.500 6.600 2.800 8.200 1.100 10.300.1z" fill="url(#fd1)"/><circle cx="8.700" cy="8.900" r="3.600" fill="#3a1fa6"/><path d="M3.300 7.300c1.100-1.900 3.700-2.500 5.500-1.300-1.300-.1-2.300.400-2.700 1.300 1.500 0 2.700.400 3 1.400-1.200-.300-2.200.1-2.600 1-.500 1 .100 2.400 1.700 2.900-2.700.500-5.300-1.200-5.300-3.700 0-.6.100-1.100.4-1.600z" fill="#2a9cf8"/><path d="M3.600 6.800c1.100-1.500 3.100-2 4.700-1.300-1.200.100-2 .600-2.400 1.500-.9-.1-1.700-.100-2.300-.2z" fill="#22e0f4"/></svg><span class="t" id="t24" style="letter-spacing:0.415px">https://firefox-source-docs.mozilla.org/devtools-user/browser_toolbox/index.ht...</span></div>
<div class="row" style="top:135.5px"><svg class="ic" width="16" height="16" viewBox="0 0 16 16"><path fill="#111" d="M8 .9C4 .9.800 4.100.800 8.100c0 3.200 2.100 5.900 4.900 6.800.4.100.5-.2.500-.3v-1.300c-2 .400-2.400-.900-2.400-.900-.300-.800-.800-1.100-.800-1.100-.700-.400 0-.400 0-.400.700 0 1.100.700 1.100.700.600 1.100 1.700.800 2.100.600.100-.500.300-.800.500-.900-1.600-.200-3.300-.800-3.300-3.600 0-.800.300-1.400.700-1.900-.100-.200-.300-.900.100-1.900 0 0 .600-.200 2 .700a6.900 6.900 0 0 1 3.600 0c1.400-.900 2-.700 2-.700.400 1 .100 1.700.100 1.900.500.500.700 1.100.700 1.900 0 2.800-1.700 3.400-3.300 3.600.300.200.500.700.500 1.300v2c0 .200.100.400.500.300a7.200 7.200 0 0 0 4.900-6.800C15.200 4.100 12 .9 8 .9z"/></svg><span class="t" id="t25" style="letter-spacing:0.527px">https://gist.github.com/MrOtherGuy/a673848c95823225f7b198199f87a396</span></div>
<div class="row" style="top:167.5px"><svg class="ic" width="16" height="16" viewBox="0 0 16 16"><rect width="16" height="16" fill="#c8e4f3"/><path d="M4.600 3.200L8.400 2.800 10.600 3.600 13.100 5.200 12.700 6.700 10.800 7.200 9.400 7.700 9 9.300 9.600 11.900H3V9.500L3.600 6z" fill="#0a0a0a"/><path d="M10.200 4.700l1.200.6" stroke="#555" stroke-width=".7"/></svg><span class="t" id="t26" style="letter-spacing:0.327px">https://udn.realityripple.com/docs/Web/CSS/Mozilla_Extensions</span></div>
<div class="row" style="top:199.5px"><svg class="ic" width="16" height="16" viewBox="0 0 16 16"><defs><linearGradient id="zn1" x1="1" y1="0" x2="0" y2="1"><stop offset="0" stop-color="#9cc6e2"/><stop offset=".55" stop-color="#8fa680"/><stop offset="1" stop-color="#4c5a36"/></linearGradient></defs><rect width="16" height="8.600" fill="url(#zn1)"/><ellipse cx="7.200" cy="4.100" rx="6" ry="2.100" transform="rotate(8 7.200 4.100)" fill="#c4b57e"/><ellipse cx="5.500" cy="3.300" rx="2.300" ry="1" fill="#d9b97c"/><path d="M0 6.200c3 1.800 9 2.400 16 1v1.400H0z" fill="#3c4a2c"/><rect y="8.600" width="16" height="7.400" fill="#fff"/><text x="8" y="15.800" font-family="Liberation Sans, sans-serif" font-weight="bold" font-size="7.600" text-anchor="middle" fill="#0a0a0a" textLength="14.500" lengthAdjust="spacingAndGlyphs" stroke="#0a0a0a" stroke-width=".3">zine</text></svg><span class="t" id="t27" style="letter-spacing:0.409px">http://kb.mozillazine.org/About:config_entries</span></div>
<div class="row" style="top:231.5px"><svg class="ic" width="16" height="16" viewBox="0 0 16 16"><path d="M5.500.5L13.800 8.600V11.600L10.500 15.600H5.800L2 11.600 2.200 4.200 4.500 6.800z" fill="#f2104f" stroke="#f2104f" stroke-width=".6" stroke-linejoin="round"/><path d="M8 12.900L5.500 10.400c-.6-.7-.5-1.600.1-2.100.7-.5 1.700-.3 2.400.5.700-.8 1.700-1 2.400-.5.600.5.700 1.400.1 2.100z" fill="#ffc400"/></svg><span class="t" id="t28" style="letter-spacing:0.363px">https://htmlcss.fandom.com/wiki/Category:CSS_Properties</span></div>
<div class="row" style="top:263.5px"><svg class="ic" width="16" height="16" viewBox="0 0 16 16"><defs><linearGradient id="sf1" x1=".3" y1="0" x2=".7" y2="1"><stop offset="0" stop-color="#ff9d3e"/><stop offset=".5" stop-color="#ff6a52"/><stop offset="1" stop-color="#ee2a66"/></linearGradient></defs><circle cx="7.300" cy="7.400" r="6.100" fill="none" stroke="url(#sf1)" stroke-width="2.100"/><path d="M12 12.300l3 2.900" stroke="#e0205c" stroke-width="2.500" stroke-linecap="round"/></svg><span class="t" id="t29" style="letter-spacing:0.420px">https://searchfox.org/mozilla-central/search?q=&amp;path=.svg%24</span></div>
<div class="row" style="top:295.5px"><svg class="ic" width="16" height="16" viewBox="0 0 16 16"><rect width="16" height="16" fill="#050505"/><path d="M4.400 2v10.300" stroke="#00d230" stroke-width="1.300"/><path d="M6.300 3.200h5.600l-1.500 2.300 1.500 2.400H6.300" fill="none" stroke="#00d230" stroke-width="1.400"/></svg><span class="t" id="t30" style="letter-spacing:0.468px">https://support.mozilla.org/en-US/questions/new/desktop/form</span></div>
<div class="row" style="top:327.5px"><svg class="ic" width="17" height="16" viewBox="0 0 17 16"><rect x="0.5" y="1.9" width="6.2" height="3" fill="#bcbcbc" stroke="#1a1a1a" stroke-width="1"/><rect x="0.5" y="4.9" width="15" height="9.500" fill="none" stroke="#1a1a1a" stroke-width="1.1"/></svg><span class="t" id="t31" style="letter-spacing:0.500px">rechts 20</span><span class="cnt"><span class="grp" style="left:0px"><svg class="cf" width="16" height="16" viewBox="0 0 16.800 16.800"><path d="M2.6 1.9h3.3c.4 0 .8.2 1 .5l.9 1.2h5.6c1 0 1.8.8 1.8 1.8v6.9c0 1-.8 1.8-1.8 1.8H2.6c-1 0-1.8-.8-1.8-1.8V3.7c0-1 .8-1.8 1.8-1.8z" fill="none" stroke="#a0a0a0" stroke-width="1.500" stroke-linejoin="round"/></svg><span class="n" style="color:#a0a0a0">0</span><span class="bar" style="background:#c2c2c2"></span><svg class="cs" width="17.700" height="16" viewBox="0 0 17 16" preserveAspectRatio="none"><path d="M8.5 1.3c.3 0 .55.17.68.45l1.75 3.6 3.95.58c.62.1.87.85.42 1.29l-2.86 2.8.68 3.95c.1.62-.54 1.09-1.1.8L8.5 12.9l-3.53 1.87c-.56.29-1.2-.18-1.1-.8l.68-3.95-2.86-2.8c-.45-.44-.2-1.2.42-1.29l3.95-.58 1.76-3.6c.13-.28.39-.45.68-.45z" fill="none" stroke="#111" stroke-width="1.400" stroke-linejoin="round"/></svg></span><span class="n n2" style="color:#111">20</span><svg class="ch" width="8" height="14" viewBox="0 0 8 14"><path d="M1.200 1.400L6 6.900 1.200 12.400" fill="none" stroke="#707070" stroke-width="1.300" stroke-linecap="round" stroke-linejoin="round"/></svg></span></div>
<div class="row" style="top:359.5px"><svg class="ic" width="17" height="16" viewBox="0 0 17 16"><rect x="0.5" y="1.9" width="6.2" height="3" fill="#bcbcbc" stroke="#1a1a1a" stroke-width="1"/><rect x="0.5" y="4.9" width="15" height="9.500" fill="none" stroke="#1a1a1a" stroke-width="1.1"/></svg><span class="t" id="t32" style="letter-spacing:0.325px">Neuer Ordner  dre</span><span class="cnt"><span class="grp" style="left:0px"><svg class="cf" width="16" height="16" viewBox="0 0 16.800 16.800"><path d="M2.6 1.9h3.3c.4 0 .8.2 1 .5l.9 1.2h5.6c1 0 1.8.8 1.8 1.8v6.9c0 1-.8 1.8-1.8 1.8H2.6c-1 0-1.8-.8-1.8-1.8V3.7c0-1 .8-1.8 1.8-1.8z" fill="none" stroke="#a0a0a0" stroke-width="1.500" stroke-linejoin="round"/></svg><span class="n" style="color:#a0a0a0">0</span><span class="bar" style="background:#c2c2c2"></span><svg class="cs" width="17.700" height="16" viewBox="0 0 17 16" preserveAspectRatio="none"><path d="M8.5 1.3c.3 0 .55.17.68.45l1.75 3.6 3.95.58c.62.1.87.85.42 1.29l-2.86 2.8.68 3.95c.1.62-.54 1.09-1.1.8L8.5 12.9l-3.53 1.87c-.56.29-1.2-.18-1.1-.8l.68-3.95-2.86-2.8c-.45-.44-.2-1.2.42-1.29l3.95-.58 1.76-3.6c.13-.28.39-.45.68-.45z" fill="none" stroke="#a0a0a0" stroke-width="1.400" stroke-linejoin="round"/></svg></span><span class="n n2" style="color:#a0a0a0">0</span><svg class="ch" width="8" height="14" viewBox="0 0 8 14"><path d="M1.200 1.400L6 6.900 1.200 12.400" fill="none" stroke="#f08a1c" stroke-width="1.300" stroke-linecap="round" stroke-linejoin="round"/></svg></span></div>
<div class="row" style="top:391.5px"><svg class="ic" width="17" height="16" viewBox="0 0 17 16"><rect x="0.5" y="1.9" width="6.2" height="3" fill="#bcbcbc" stroke="#1a1a1a" stroke-width="1"/><rect x="0.5" y="4.9" width="15" height="9.500" fill="none" stroke="#1a1a1a" stroke-width="1.1"/></svg><span class="t" id="t33" style="letter-spacing:0.229px">Neuer Or</span><span class="cnt"><span class="grp" style="left:0px"><svg class="cf" width="16" height="16" viewBox="0 0 16.800 16.800"><path d="M2.6 1.9h3.3c.4 0 .8.2 1 .5l.9 1.2h5.6c1 0 1.8.8 1.8 1.8v6.9c0 1-.8 1.8-1.8 1.8H2.6c-1 0-1.8-.8-1.8-1.8V3.7c0-1 .8-1.8 1.8-1.8z" fill="none" stroke="#111" stroke-width="1.500" stroke-linejoin="round"/></svg><span class="n" style="color:#111">4</span><span class="bar" style="background:#7c7c7c"></span><svg class="cs" width="17.700" height="16" viewBox="0 0 17 16" preserveAspectRatio="none"><path d="M8.5 1.3c.3 0 .55.17.68.45l1.75 3.6 3.95.58c.62.1.87.85.42 1.29l-2.86 2.8.68 3.95c.1.62-.54 1.09-1.1.8L8.5 12.9l-3.53 1.87c-.56.29-1.2-.18-1.1-.8l.68-3.95-2.86-2.8c-.45-.44-.2-1.2.42-1.29l3.95-.58 1.76-3.6c.13-.28.39-.45.68-.45z" fill="none" stroke="#111" stroke-width="1.400" stroke-linejoin="round"/></svg></span><span class="n n2" style="color:#111">18</span><svg class="ch" width="8" height="14" viewBox="0 0 8 14"><path d="M1.200 1.400L6 6.900 1.200 12.400" fill="none" stroke="#707070" stroke-width="1.300" stroke-linecap="round" stroke-linejoin="round"/></svg></span></div>
<div class="row" style="top:423.5px"><svg class="ic" width="17" height="16" viewBox="0 0 17 16"><rect x="0.5" y="1.9" width="6.2" height="3" fill="#bcbcbc" stroke="#1a1a1a" stroke-width="1"/><rect x="0.5" y="4.9" width="15" height="9.500" fill="none" stroke="#1a1a1a" stroke-width="1.1"/></svg><span class="t" id="t34" style="letter-spacing:0.311px">Neuer Orer</span><span class="cnt"><span class="grp" style="left:0px"><svg class="cf" width="16" height="16" viewBox="0 0 16.800 16.800"><path d="M2.6 1.9h3.3c.4 0 .8.2 1 .5l.9 1.2h5.6c1 0 1.8.8 1.8 1.8v6.9c0 1-.8 1.8-1.8 1.8H2.6c-1 0-1.8-.8-1.8-1.8V3.7c0-1 .8-1.8 1.8-1.8z" fill="none" stroke="#111" stroke-width="1.500" stroke-linejoin="round"/></svg><span class="n" style="color:#111">20</span><span class="bar" style="background:#7c7c7c"></span><svg class="cs" width="17.700" height="16" viewBox="0 0 17 16" preserveAspectRatio="none"><path d="M8.5 1.3c.3 0 .55.17.68.45l1.75 3.6 3.95.58c.62.1.87.85.42 1.29l-2.86 2.8.68 3.95c.1.62-.54 1.09-1.1.8L8.5 12.9l-3.53 1.87c-.56.29-1.2-.18-1.1-.8l.68-3.95-2.86-2.8c-.45-.44-.2-1.2.42-1.29l3.95-.58 1.76-3.6c.13-.28.39-.45.68-.45z" fill="none" stroke="#a0a0a0" stroke-width="1.400" stroke-linejoin="round"/></svg></span><span class="n n2" style="color:#a0a0a0">0</span><svg class="ch" width="8" height="14" viewBox="0 0 8 14"><path d="M1.200 1.400L6 6.900 1.200 12.400" fill="none" stroke="#707070" stroke-width="1.300" stroke-linecap="round" stroke-linejoin="round"/></svg></span></div>
<div class="row" style="top:455.5px"><svg class="ic" width="17" height="16" viewBox="0 0 17 16"><rect x="0.5" y="1.9" width="6.2" height="3" fill="#bcbcbc" stroke="#1a1a1a" stroke-width="1"/><rect x="0.5" y="4.9" width="15" height="9.500" fill="none" stroke="#1a1a1a" stroke-width="1.1"/></svg><span class="t" id="t35" style="letter-spacing:0.255px">Neuer Ordner</span><span class="cnt"><span class="grp" style="left:0px"><svg class="cf" width="16" height="16" viewBox="0 0 16.800 16.800"><path d="M2.6 1.9h3.3c.4 0 .8.2 1 .5l.9 1.2h5.6c1 0 1.8.8 1.8 1.8v6.9c0 1-.8 1.8-1.8 1.8H2.6c-1 0-1.8-.8-1.8-1.8V3.7c0-1 .8-1.8 1.8-1.8z" fill="none" stroke="#a0a0a0" stroke-width="1.500" stroke-linejoin="round"/></svg><span class="n" style="color:#a0a0a0">0</span><span class="bar" style="background:#c2c2c2"></span><svg class="cs" width="17.700" height="16" viewBox="0 0 17 16" preserveAspectRatio="none"><path d="M8.5 1.3c.3 0 .55.17.68.45l1.75 3.6 3.95.58c.62.1.87.85.42 1.29l-2.86 2.8.68 3.95c.1.62-.54 1.09-1.1.8L8.5 12.9l-3.53 1.87c-.56.29-1.2-.18-1.1-.8l.68-3.95-2.86-2.8c-.45-.44-.2-1.2.42-1.29l3.95-.58 1.76-3.6c.13-.28.39-.45.68-.45z" fill="none" stroke="#111" stroke-width="1.400" stroke-linejoin="round"/></svg></span><span class="n n2" style="color:#111">48</span><svg class="ch" width="8" height="14" viewBox="0 0 8 14"><path d="M1.200 1.400L6 6.900 1.200 12.400" fill="none" stroke="#707070" stroke-width="1.300" stroke-linecap="round" stroke-linejoin="round"/></svg></span></div>
<div class="row" style="top:487.5px"><svg class="ic" width="17" height="16" viewBox="0 0 17 16"><rect x="0.5" y="1.9" width="6.2" height="3" fill="#bcbcbc" stroke="#1a1a1a" stroke-width="1"/><rect x="0.5" y="4.9" width="15" height="9.500" fill="none" stroke="#1a1a1a" stroke-width="1.1"/></svg><span class="t" id="t36" style="letter-spacing:0.255px">Neuer Ordner</span><span class="cnt"><span class="grp" style="left:0px"><svg class="cf" width="16" height="16" viewBox="0 0 16.800 16.800"><path d="M2.6 1.9h3.3c.4 0 .8.2 1 .5l.9 1.2h5.6c1 0 1.8.8 1.8 1.8v6.9c0 1-.8 1.8-1.8 1.8H2.6c-1 0-1.8-.8-1.8-1.8V3.7c0-1 .8-1.8 1.8-1.8z" fill="none" stroke="#a0a0a0" stroke-width="1.500" stroke-linejoin="round"/></svg><span class="n" style="color:#a0a0a0">0</span><span class="bar" style="background:#c2c2c2"></span><svg class="cs" width="17.700" height="16" viewBox="0 0 17 16" preserveAspectRatio="none"><path d="M8.5 1.3c.3 0 .55.17.68.45l1.75 3.6 3.95.58c.62.1.87.85.42 1.29l-2.86 2.8.68 3.95c.1.62-.54 1.09-1.1.8L8.5 12.9l-3.53 1.87c-.56.29-1.2-.18-1.1-.8l.68-3.95-2.86-2.8c-.45-.44-.2-1.2.42-1.29l3.95-.58 1.76-3.6c.13-.28.39-.45.68-.45z" fill="none" stroke="#a0a0a0" stroke-width="1.400" stroke-linejoin="round"/></svg></span><span class="n n2" style="color:#a0a0a0">0</span><svg class="ch" width="8" height="14" viewBox="0 0 8 14"><path d="M1.200 1.400L6 6.900 1.200 12.400" fill="none" stroke="#f08a1c" stroke-width="1.300" stroke-linecap="round" stroke-linejoin="round"/></svg></span></div>
<div class="row" style="top:519.5px"><svg class="ic" width="17" height="16" viewBox="0 0 17 16"><rect x="0.5" y="1.9" width="6.2" height="3" fill="#bcbcbc" stroke="#1a1a1a" stroke-width="1"/><rect x="0.5" y="4.9" width="15" height="9.500" fill="none" stroke="#1a1a1a" stroke-width="1.1"/></svg><span class="t" id="t37" style="letter-spacing:0.289px">euer rdner</span><span class="cnt"><span class="grp" style="left:0px"><svg class="cf" width="16" height="16" viewBox="0 0 16.800 16.800"><path d="M2.6 1.9h3.3c.4 0 .8.2 1 .5l.9 1.2h5.6c1 0 1.8.8 1.8 1.8v6.9c0 1-.8 1.8-1.8 1.8H2.6c-1 0-1.8-.8-1.8-1.8V3.7c0-1 .8-1.8 1.8-1.8z" fill="none" stroke="#a0a0a0" stroke-width="1.500" stroke-linejoin="round"/></svg><span class="n" style="color:#a0a0a0">0</span><span class="bar" style="background:#c2c2c2"></span><svg class="cs" width="17.700" height="16" viewBox="0 0 17 16" preserveAspectRatio="none"><path d="M8.5 1.3c.3 0 .55.17.68.45l1.75 3.6 3.95.58c.62.1.87.85.42 1.29l-2.86 2.8.68 3.95c.1.62-.54 1.09-1.1.8L8.5 12.9l-3.53 1.87c-.56.29-1.2-.18-1.1-.8l.68-3.95-2.86-2.8c-.45-.44-.2-1.2.42-1.29l3.95-.58 1.76-3.6c.13-.28.39-.45.68-.45z" fill="none" stroke="#111" stroke-width="1.400" stroke-linejoin="round"/></svg></span><span class="n n2" style="color:#111">20</span><svg class="ch" width="8" height="14" viewBox="0 0 8 14"><path d="M1.200 1.400L6 6.900 1.200 12.400" fill="none" stroke="#707070" stroke-width="1.300" stroke-linecap="round" stroke-linejoin="round"/></svg></span></div>
<div class="row" style="top:551.5px"><svg class="ic" width="17" height="16" viewBox="0 0 17 16"><rect x="0.5" y="1.9" width="6.2" height="3" fill="#bcbcbc" stroke="#1a1a1a" stroke-width="1"/><rect x="0.5" y="4.9" width="15" height="9.500" fill="none" stroke="#1a1a1a" stroke-width="1.1"/></svg><span class="t" id="t38" style="letter-spacing:0.491px">Neuer futtar</span><span class="cnt"><span class="grp" style="left:0px"><svg class="cf" width="16" height="16" viewBox="0 0 16.800 16.800"><path d="M2.6 1.9h3.3c.4 0 .8.2 1 .5l.9 1.2h5.6c1 0 1.8.8 1.8 1.8v6.9c0 1-.8 1.8-1.8 1.8H2.6c-1 0-1.8-.8-1.8-1.8V3.7c0-1 .8-1.8 1.8-1.8z" fill="none" stroke="#111" stroke-width="1.500" stroke-linejoin="round"/></svg><span class="n" style="color:#111">68</span><span class="bar" style="background:#7c7c7c"></span><svg class="cs" width="17.700" height="16" viewBox="0 0 17 16" preserveAspectRatio="none"><path d="M8.5 1.3c.3 0 .55.17.68.45l1.75 3.6 3.95.58c.62.1.87.85.42 1.29l-2.86 2.8.68 3.95c.1.62-.54 1.09-1.1.8L8.5 12.9l-3.53 1.87c-.56.29-1.2-.18-1.1-.8l.68-3.95-2.86-2.8c-.45-.44-.2-1.2.42-1.29l3.95-.58 1.76-3.6c.13-.28.39-.45.68-.45z" fill="none" stroke="#111" stroke-width="1.400" stroke-linejoin="round"/></svg></span><span class="n n2" style="color:#111">48</span><svg class="ch" width="8" height="14" viewBox="0 0 8 14"><path d="M1.200 1.400L6 6.900 1.200 12.400" fill="none" stroke="#707070" stroke-width="1.300" stroke-linecap="round" stroke-linejoin="round"/></svg></span></div>
<div class="row" style="top:583.5px"><svg class="ic" width="17" height="16" viewBox="0 0 17 16"><rect x="0.5" y="1.9" width="6.2" height="3" fill="#bcbcbc" stroke="#1a1a1a" stroke-width="1"/><rect x="0.5" y="4.9" width="15" height="9.500" fill="none" stroke="#1a1a1a" stroke-width="1.1"/></svg><span class="t" id="t39" style="letter-spacing:0.255px">Neuer Ordner</span><span class="cnt"><span class="grp" style="left:0px"><svg class="cf" width="16" height="16" viewBox="0 0 16.800 16.800"><path d="M2.6 1.9h3.3c.4 0 .8.2 1 .5l.9 1.2h5.6c1 0 1.8.8 1.8 1.8v6.9c0 1-.8 1.8-1.8 1.8H2.6c-1 0-1.8-.8-1.8-1.8V3.7c0-1 .8-1.8 1.8-1.8z" fill="none" stroke="#111" stroke-width="1.500" stroke-linejoin="round"/></svg><span class="n" style="color:#111">11</span><span class="bar" style="background:#7c7c7c"></span><svg class="cs" width="17.700" height="16" viewBox="0 0 17 16" preserveAspectRatio="none"><path d="M8.5 1.3c.3 0 .55.17.68.45l1.75 3.6 3.95.58c.62.1.87.85.42 1.29l-2.86 2.8.68 3.95c.1.62-.54 1.09-1.1.8L8.5 12.9l-3.53 1.87c-.56.29-1.2-.18-1.1-.8l.68-3.95-2.86-2.8c-.45-.44-.2-1.2.42-1.29l3.95-.58 1.76-3.6c.13-.28.39-.45.68-.45z" fill="none" stroke="#111" stroke-width="1.400" stroke-linejoin="round"/></svg></span><span class="n n2" style="color:#111">11</span><svg class="ch" width="8" height="14" viewBox="0 0 8 14"><path d="M1.200 1.400L6 6.900 1.200 12.400" fill="none" stroke="#707070" stroke-width="1.300" stroke-linecap="round" stroke-linejoin="round"/></svg></span></div>
<div class="row" style="top:615.5px"><svg class="ic" width="17" height="16" viewBox="0 0 17 16"><rect x="0.5" y="1.9" width="6.2" height="3" fill="#bcbcbc" stroke="#1a1a1a" stroke-width="1"/><rect x="0.5" y="4.9" width="15" height="9.500" fill="none" stroke="#1a1a1a" stroke-width="1.1"/></svg><span class="t" id="t40" style="letter-spacing:0.255px">Neuer Ordner</span><span class="cnt"><span class="grp" style="left:0px"><svg class="cf" width="16" height="16" viewBox="0 0 16.800 16.800"><path d="M2.6 1.9h3.3c.4 0 .8.2 1 .5l.9 1.2h5.6c1 0 1.8.8 1.8 1.8v6.9c0 1-.8 1.8-1.8 1.8H2.6c-1 0-1.8-.8-1.8-1.8V3.7c0-1 .8-1.8 1.8-1.8z" fill="none" stroke="#a0a0a0" stroke-width="1.500" stroke-linejoin="round"/></svg><span class="n" style="color:#a0a0a0">0</span><span class="bar" style="background:#c2c2c2"></span><svg class="cs" width="17.700" height="16" viewBox="0 0 17 16" preserveAspectRatio="none"><path d="M8.5 1.3c.3 0 .55.17.68.45l1.75 3.6 3.95.58c.62.1.87.85.42 1.29l-2.86 2.8.68 3.95c.1.62-.54 1.09-1.1.8L8.5 12.9l-3.53 1.87c-.56.29-1.2-.18-1.1-.8l.68-3.95-2.86-2.8c-.45-.44-.2-1.2.42-1.29l3.95-.58 1.76-3.6c.13-.28.39-.45.68-.45z" fill="none" stroke="#111" stroke-width="1.400" stroke-linejoin="round"/></svg></span><span class="n n2" style="color:#111">2</span><svg class="ch" width="8" height="14" viewBox="0 0 8 14"><path d="M1.200 1.400L6 6.900 1.200 12.400" fill="none" stroke="#707070" stroke-width="1.300" stroke-linecap="round" stroke-linejoin="round"/></svg></span></div>
<div class="row" style="top:647.5px"><svg class="ic" width="17" height="16" viewBox="0 0 17 16"><rect x="0.5" y="1.9" width="6.2" height="3" fill="#bcbcbc" stroke="#1a1a1a" stroke-width="1"/><rect x="0.5" y="4.9" width="15" height="9.500" fill="none" stroke="#1a1a1a" stroke-width="1.1"/></svg><span class="t" id="t41" style="letter-spacing:0.255px">Neuer Ordner</span><span class="cnt"><span class="grp" style="left:0px"><svg class="cf" width="16" height="16" viewBox="0 0 16.800 16.800"><path d="M2.6 1.9h3.3c.4 0 .8.2 1 .5l.9 1.2h5.6c1 0 1.8.8 1.8 1.8v6.9c0 1-.8 1.8-1.8 1.8H2.6c-1 0-1.8-.8-1.8-1.8V3.7c0-1 .8-1.8 1.8-1.8z" fill="none" stroke="#a0a0a0" stroke-width="1.500" stroke-linejoin="round"/></svg><span class="n" style="color:#a0a0a0">0</span><span class="bar" style="background:#c2c2c2"></span><svg class="cs" width="17.700" height="16" viewBox="0 0 17 16" preserveAspectRatio="none"><path d="M8.5 1.3c.3 0 .55.17.68.45l1.75 3.6 3.95.58c.62.1.87.85.42 1.29l-2.86 2.8.68 3.95c.1.62-.54 1.09-1.1.8L8.5 12.9l-3.53 1.87c-.56.29-1.2-.18-1.1-.8l.68-3.95-2.86-2.8c-.45-.44-.2-1.2.42-1.29l3.95-.58 1.76-3.6c.13-.28.39-.45.68-.45z" fill="none" stroke="#111" stroke-width="1.400" stroke-linejoin="round"/></svg></span><span class="n n2" style="color:#111">8</span><svg class="ch" width="8" height="14" viewBox="0 0 8 14"><path d="M1.200 1.400L6 6.900 1.200 12.400" fill="none" stroke="#707070" stroke-width="1.300" stroke-linecap="round" stroke-linejoin="round"/></svg></span></div>
<div class="row" style="top:679.5px"><svg class="ic" width="17" height="16" viewBox="0 0 17 16"><rect x="0.5" y="1.9" width="6.2" height="3" fill="#bcbcbc" stroke="#1a1a1a" stroke-width="1"/><rect x="0.5" y="4.9" width="15" height="9.500" fill="none" stroke="#1a1a1a" stroke-width="1.1"/></svg><span class="t" id="t42" style="letter-spacing:0.255px">Neuer Ordner</span><span class="cnt"><span class="grp" style="left:0px"><svg class="cf" width="16" height="16" viewBox="0 0 16.800 16.800"><path d="M2.6 1.9h3.3c.4 0 .8.2 1 .5l.9 1.2h5.6c1 0 1.8.8 1.8 1.8v6.9c0 1-.8 1.8-1.8 1.8H2.6c-1 0-1.8-.8-1.8-1.8V3.7c0-1 .8-1.8 1.8-1.8z" fill="none" stroke="#a0a0a0" stroke-width="1.500" stroke-linejoin="round"/></svg><span class="n" style="color:#a0a0a0">0</span><span class="bar" style="background:#c2c2c2"></span><svg class="cs" width="17.700" height="16" viewBox="0 0 17 16" preserveAspectRatio="none"><path d="M8.5 1.3c.3 0 .55.17.68.45l1.75 3.6 3.95.58c.62.1.87.85.42 1.29l-2.86 2.8.68 3.95c.1.62-.54 1.09-1.1.8L8.5 12.9l-3.53 1.87c-.56.29-1.2-.18-1.1-.8l.68-3.95-2.86-2.8c-.45-.44-.2-1.2.42-1.29l3.95-.58 1.76-3.6c.13-.28.39-.45.68-.45z" fill="none" stroke="#111" stroke-width="1.400" stroke-linejoin="round"/></svg></span><span class="n n2" style="color:#111">1</span><svg class="ch" width="8" height="14" viewBox="0 0 8 14"><path d="M1.200 1.400L6 6.900 1.200 12.400" fill="none" stroke="#707070" stroke-width="1.300" stroke-linecap="round" stroke-linejoin="round"/></svg></span></div>
<div class="row" style="top:711.5px"><svg class="ic" width="17" height="16" viewBox="0 0 17 16"><rect x="0.5" y="1.9" width="6.2" height="3" fill="#bcbcbc" stroke="#1a1a1a" stroke-width="1"/><rect x="0.5" y="4.9" width="15" height="9.500" fill="none" stroke="#1a1a1a" stroke-width="1.1"/></svg><span class="t" id="t43" style="letter-spacing:0.255px">Neuer Ordner</span><span class="cnt"><span class="grp" style="left:0px"><svg class="cf" width="16" height="16" viewBox="0 0 16.800 16.800"><path d="M2.6 1.9h3.3c.4 0 .8.2 1 .5l.9 1.2h5.6c1 0 1.8.8 1.8 1.8v6.9c0 1-.8 1.8-1.8 1.8H2.6c-1 0-1.8-.8-1.8-1.8V3.7c0-1 .8-1.8 1.8-1.8z" fill="none" stroke="#a0a0a0" stroke-width="1.500" stroke-linejoin="round"/></svg><span class="n" style="color:#a0a0a0">0</span><span class="bar" style="background:#c2c2c2"></span><svg class="cs" width="17.700" height="16" viewBox="0 0 17 16" preserveAspectRatio="none"><path d="M8.5 1.3c.3 0 .55.17.68.45l1.75 3.6 3.95.58c.62.1.87.85.42 1.29l-2.86 2.8.68 3.95c.1.62-.54 1.09-1.1.8L8.5 12.9l-3.53 1.87c-.56.29-1.2-.18-1.1-.8l.68-3.95-2.86-2.8c-.45-.44-.2-1.2.42-1.29l3.95-.58 1.76-3.6c.13-.28.39-.45.68-.45z" fill="none" stroke="#a0a0a0" stroke-width="1.400" stroke-linejoin="round"/></svg></span><span class="n n2" style="color:#a0a0a0">0</span><svg class="ch" width="8" height="14" viewBox="0 0 8 14"><path d="M1.200 1.400L6 6.900 1.200 12.400" fill="none" stroke="#f08a1c" stroke-width="1.300" stroke-linecap="round" stroke-linejoin="round"/></svg></span></div>
<div class="row" style="top:743.5px"><svg class="ic" width="17" height="16" viewBox="0 0 17 16"><rect x="0.5" y="1.9" width="6.2" height="3" fill="#bcbcbc" stroke="#1a1a1a" stroke-width="1"/><rect x="0.5" y="4.9" width="15" height="9.500" fill="none" stroke="#1a1a1a" stroke-width="1.1"/></svg><span class="t" id="t44" style="letter-spacing:0.255px">Neuer Ordner</span><span class="cnt"><span class="grp" style="left:0px"><svg class="cf" width="16" height="16" viewBox="0 0 16.800 16.800"><path d="M2.6 1.9h3.3c.4 0 .8.2 1 .5l.9 1.2h5.6c1 0 1.8.8 1.8 1.8v6.9c0 1-.8 1.8-1.8 1.8H2.6c-1 0-1.8-.8-1.8-1.8V3.7c0-1 .8-1.8 1.8-1.8z" fill="none" stroke="#a0a0a0" stroke-width="1.500" stroke-linejoin="round"/></svg><span class="n" style="color:#a0a0a0">0</span><span class="bar" style="background:#c2c2c2"></span><svg class="cs" width="17.700" height="16" viewBox="0 0 17 16" preserveAspectRatio="none"><path d="M8.5 1.3c.3 0 .55.17.68.45l1.75 3.6 3.95.58c.62.1.87.85.42 1.29l-2.86 2.8.68 3.95c.1.62-.54 1.09-1.1.8L8.5 12.9l-3.53 1.87c-.56.29-1.2-.18-1.1-.8l.68-3.95-2.86-2.8c-.45-.44-.2-1.2.42-1.29l3.95-.58 1.76-3.6c.13-.28.39-.45.68-.45z" fill="none" stroke="#a0a0a0" stroke-width="1.400" stroke-linejoin="round"/></svg></span><span class="n n2" style="color:#a0a0a0">0</span><svg class="ch" width="8" height="14" viewBox="0 0 8 14"><path d="M1.200 1.400L6 6.900 1.200 12.400" fill="none" stroke="#f08a1c" stroke-width="1.300" stroke-linecap="round" stroke-linejoin="round"/></svg></span></div>
</div>
</body></html>
